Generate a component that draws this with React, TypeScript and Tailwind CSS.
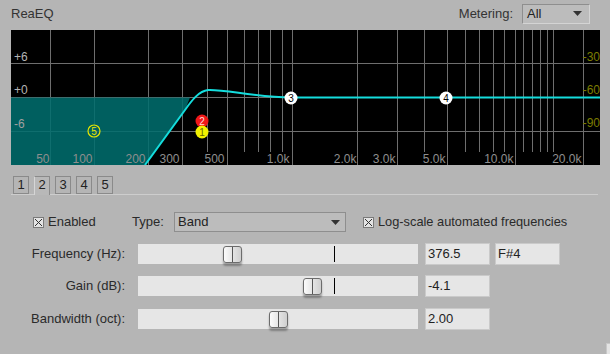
import React from "react";

const fullLines = [50, 94, 148, 182, 227, 292, 357, 397, 447, 515, 583];
const shortLines = [207, 244, 258, 270, 282, 424, 465, 479, 493, 504, 523, 532, 540, 547, 553];
const freqLabels: [string, number][] = [
  ["50", 49],
  ["100", 92],
  ["200", 145],
  ["300", 179],
  ["500", 224],
  ["1.0k", 289],
  ["2.0k", 356],
  ["3.0k", 395],
  ["5.0k", 445],
  ["10.0k", 513],
  ["20.0k", 581],
];

const FONT = "'Liberation Sans', Arial, sans-serif";

function Graph() {
  const ox = 11;
  const grid = "#6e6e6e";
  return (
    <div className="ml-[11px] w-[589px] h-[135px] bg-black">
      <svg width={589} height={135} viewBox="0 0 589 135" style={{ display: "block", fontFamily: FONT }}>
        {[33, 67, 101].map((y) => (
          <line key={y} x1={0} x2={589} y1={y + 0.5} y2={y + 0.5} stroke={grid} strokeWidth={1} />
        ))}
        {fullLines.map((x) => (
          <line key={"f" + x} x1={x - ox + 0.5} x2={x - ox + 0.5} y1={0} y2={135} stroke={grid} strokeWidth={1} />
        ))}
        {shortLines.map((x) => (
          <line key={"s" + x} x1={x - ox + 0.5} x2={x - ox + 0.5} y1={0} y2={122} stroke={grid} strokeWidth={1} />
        ))}
        <path d="M0,67.5 L179,67.5 L174,80 L134,135 L0,135 Z" fill="#006f6f" fillOpacity={0.86} />
        <text x={3} y={31} fontSize={12} fill="#b4b4b4">+6</text>
        <text x={3} y={64} fontSize={12} fill="#b4b4b4">+0</text>
        <text x={3} y={98} fontSize={12} fill="#a0a0a0">-6</text>
        <text x={589} y={31} fontSize={12} fill="#7c7c00" textAnchor="end">-30</text>
        <text x={589} y={64} fontSize={12} fill="#7c7c00" textAnchor="end">-60</text>
        <text x={589} y={97} fontSize={12} fill="#7c7c00" textAnchor="end">-90</text>
        {freqLabels.map(([t, x]) => (
          <text key={t} x={x - ox + 0.5} y={133} fontSize={12} fill="#8e8e8e" textAnchor="end">
            {t}
          </text>
        ))}
        <path
          d="M134,135 L174,80 C181,70 188,61 197,60 C212,59 245,67 280,67.5 L589,67.5"
          fill="none"
          stroke="#14dcdc"
          strokeWidth={2}
        />
        <circle cx={83} cy={101} r={6} fill="none" stroke="#e6e600" strokeWidth={1.2} />
        <text x={83} y={104.5} fontSize={10} fill="#e6e600" textAnchor="middle">5</text>
        <circle cx={191} cy={91} r={6.5} fill="#f01818" />
        <text x={191} y={94.5} fontSize={10} fill="#ffd8d8" textAnchor="middle">2</text>
        <circle cx={191} cy={102} r={6.5} fill="#f2f200" />
        <text x={191} y={105.5} fontSize={10} fill="#666600" textAnchor="middle">1</text>
        <circle cx={280} cy={68} r={6.5} fill="#ffffff" />
        <text x={280} y={71.5} fontSize={10} fill="#000" textAnchor="middle">3</text>
        <circle cx={435} cy={68} r={6.5} fill="#ffffff" />
        <text x={435} y={71.5} fontSize={10} fill="#000" textAnchor="middle">4</text>
      </svg>
    </div>
  );
}

function Arrow() {
  return (
    <svg width={9} height={5} viewBox="0 0 9 5" className="block">
      <polygon points="0,0 9,0 4.5,5" fill="#333" />
    </svg>
  );
}

function CheckBox() {
  return (
    <div className="w-[11px] h-[11px] border border-[#7a7a7a] bg-[#e4e4e4] flex items-center justify-center">
      <svg width={9} height={9} viewBox="0 0 9 9" className="block">
        <line x1={1} y1={1} x2={8} y2={8} stroke="#333" strokeWidth={1} />
        <line x1={8} y1={1} x2={1} y2={8} stroke="#333" strokeWidth={1} />
      </svg>
    </div>
  );
}

function Thumb({ left }: { left: number }) {
  return (
    <div
      className="absolute top-[2px] w-[19px] h-[17px] rounded-[3px] border border-[#6c6c6c] bg-gradient-to-r from-[#fbfbfb] to-[#cfcfcf] shadow-[0_3px_2px_rgba(0,0,0,0.3)] flex justify-center"
      style={{ left }}
    >
      <div className="w-px h-full bg-[#555]" />
    </div>
  );
}

function SliderRow({
  label,
  thumb,
  tick,
  value,
  note,
}: {
  label: string;
  thumb: number;
  tick: boolean;
  value: string;
  note?: string;
}) {
  return (
    <div className="flex items-center h-[22px]">
      <div className="w-[126px] pr-[1px] text-right text-[13px] text-[#2a2a2a]">{label}</div>
      <div className="ml-[12px] relative w-[280px] h-[20px] bg-[#e6e6e6]">
        {tick && <div className="absolute left-[196px] top-[2px] w-px h-[16px] bg-black" />}
        <Thumb left={thumb - 138} />
      </div>
      <div className="ml-[7px] w-[65px] h-[22px] bg-[#e6e6e6] border border-[#cacaca] pl-[2px] text-[13px] leading-[20px] text-[#222]">
        {value}
      </div>
      {note && (
        <div className="ml-[5px] w-[65px] h-[22px] bg-[#e6e6e6] border border-[#cacaca] pl-[2px] text-[13px] leading-[20px] text-[#222]">
          {note}
        </div>
      )}
    </div>
  );
}

export default function App() {
  return (
    <div
      className="relative w-[610px] h-[354px] bg-[#b5b5b5] overflow-hidden text-[#2a2a2a]"
      style={{ fontFamily: FONT }}
    >
      {/* header */}
      <div className="flex items-center h-[27px] pl-[11px] pr-[20px]">
        <div className="text-[13px] text-[#333]">ReaEQ</div>
        <div className="ml-auto text-[13px] text-[#333]">Metering:</div>
        <div className="ml-[9px] w-[68px] h-[20px] bg-[#bcbcbc] border border-[#8e8e8e] border-r-[#d4d4d4] border-b-[#d4d4d4] flex items-center pl-[4px] pr-[7px] text-[13px] text-[#222]">
          <span>All</span>
          <span className="ml-auto">
            <Arrow />
          </span>
        </div>
      </div>
      <div className="mt-[3px]">
        <Graph />
      </div>
      {/* tabs */}
      <div className="mt-[11px] ml-[11px] w-[587px] h-[19px] flex items-start gap-[5px] pl-[2px] border-b border-[#cdcdcd]">
        {["1", "2", "3", "4", "5"].map((t) => (
          <div
            key={t}
            className={
              t === "2"
                ? "relative w-[16px] h-[19px] border border-b-0 border-[#8a8a8a] border-l-[#d6d6d6] bg-[#b8b8b8] text-center text-[13px] leading-[16px] text-[#222]"
                : "w-[16px] h-[18px] border border-[#8a8a8a] text-center text-[13px] leading-[16px] text-[#222]"
            }
          >
            {t}
          </div>
        ))}
      </div>
      {/* enabled / type row */}
      <div className="mt-[17px] flex items-center h-[20px]">
        <div className="ml-[33px]">
          <CheckBox />
        </div>
        <div className="ml-[4px] w-[84px] text-[13px]">Enabled</div>
        <div className="w-[42px] text-[13px]">Type:</div>
        <div className="w-[172px] h-[20px] bg-[#bcbcbc] border border-[#8e8e8e] flex items-center pl-[3px] pr-[5px] text-[13px] text-[#222]">
          <span>Band</span>
          <span className="ml-auto">
            <Arrow />
          </span>
        </div>
        <div className="ml-[17px]">
          <CheckBox />
        </div>
        <div className="ml-[4px] text-[12.8px]">Log-scale automated frequencies</div>
      </div>
      <div className="mt-[11px]">
        <SliderRow label="Frequency (Hz):" thumb={223} tick value="376.5" note="F#4" />
      </div>
      <div className="mt-[10px]">
        <SliderRow label="Gain (dB):" thumb={303} tick value="-4.1" />
      </div>
      <div className="mt-[11px]">
        <SliderRow label="Bandwidth (oct):" thumb={269} tick={false} value="2.00" />
      </div>
      <div className="absolute right-0 bottom-0 w-[4px] h-[11px] bg-[#e4e4e4] border-l border-t border-[#c8c8c8]" />
    </div>
  );
}
